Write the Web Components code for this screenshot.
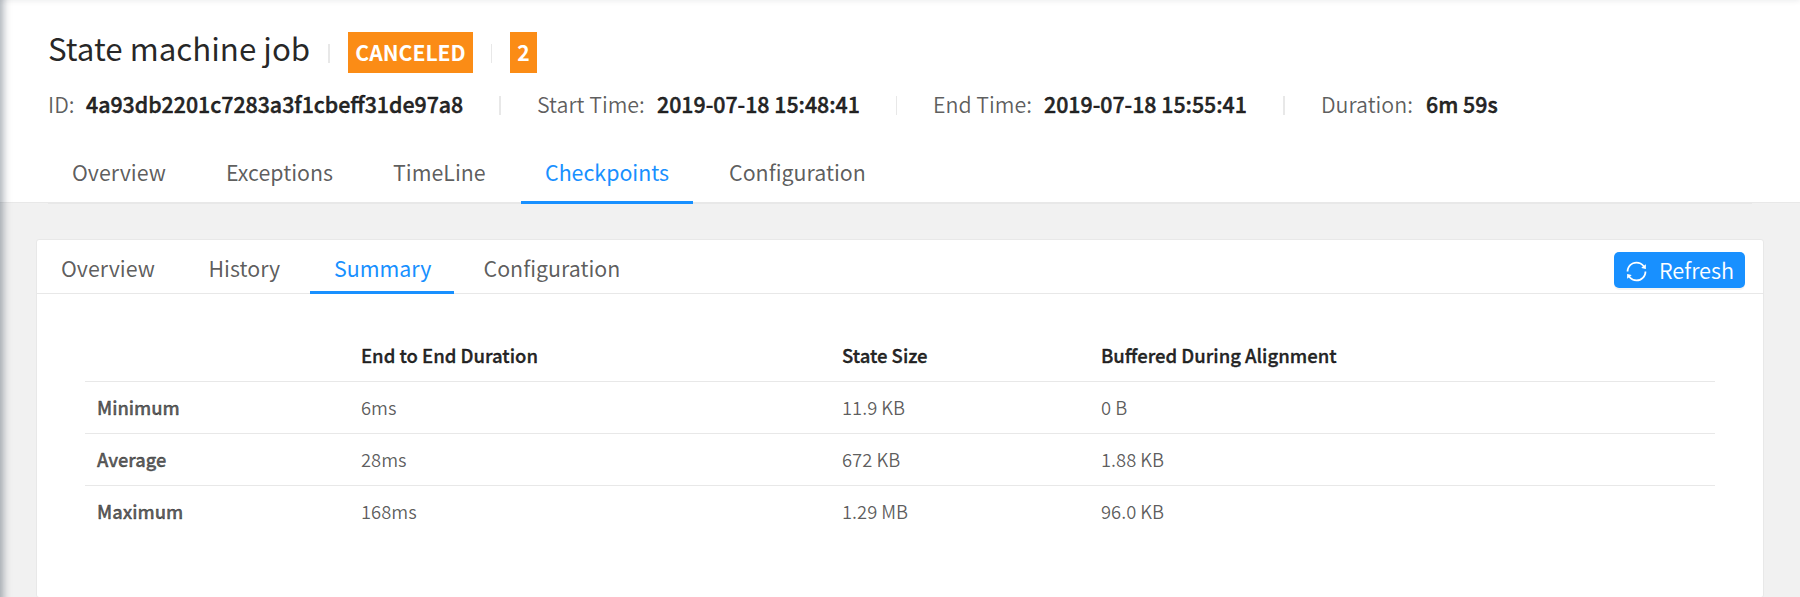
<!DOCTYPE html>
<html lang="en">
<head>
<meta charset="utf-8">
<title>State machine job</title>
<style>
html, body { margin: 0; height: 597px; overflow: hidden; }
body { background: #f1f1f1; font-family: "Noto Sans CJK SC", "Noto Sans", sans-serif; color: rgba(0,0,0,.65); }
</style>
</head>
<body>
<job-page></job-page>
<script>
const define = (name, html, setup) => {
  const template = document.createElement('template');
  template.innerHTML = html;
  customElements.define(name, class extends HTMLElement {
    connectedCallback() {
      if (this.shadowRoot) return;
      this.attachShadow({ mode: 'open' }).append(template.content.cloneNode(true));
      if (setup) setup(this);
    }
  });
};

define('job-divider', `
<style>
:host { display: block; flex: none; width: var(--w, 1px); height: 19px; background: #e8e8e8; }
</style>`);

define('job-badge', `
<style>
:host { display: block; box-sizing: border-box; flex: none; height: 41px; background: #fb8c16; color: #fff;
  font-size: 21.15px; font-weight: 700; line-height: 40px; text-align: center; white-space: nowrap; }
</style><slot></slot>`);

define('job-field', `
<style>
:host { display: flex; flex: none; font-size: 21.4px; font-weight: 350; line-height: 32px; white-space: nowrap; }
.label { flex: none; width: var(--label); }
.value { font-size: 21.33px; font-weight: 500; color: rgba(0,0,0,.85); -webkit-text-stroke: .5px rgba(0,0,0,.85); }
</style><span class="label"><slot name="label"></slot></span><span class="value"><slot></slot></span>`);

define('job-tab', `
<style>
:host { display: block; box-sizing: border-box; flex: none; padding-left: 24px; font-size: 21.38px;
  line-height: 32px; padding-top: var(--tab-top); border-bottom: 3px solid transparent; white-space: nowrap; }
:host([active]) { color: #1890ff; border-bottom-color: #1890ff; }
</style><slot></slot>`);

define('job-button', `
<style>
:host { display: flex; box-sizing: border-box; align-items: center; width: 131px; height: 36px; padding-left: 12px;
  background: #1890ff; color: #fff; border-radius: 5px; box-shadow: 0 2px 0 rgba(0,0,0,.045);
  font-size: 21.7px; font-weight: 350; line-height: 36px; }
svg { display: block; width: 21px; height: 21px; margin: 3px 12px 0 0; fill: currentColor; }
</style>
<svg viewBox="64 64 896 896"><path d="M168 504.2c1-43.7 10-86.1 26.9-126 17.3-41 42.1-77.7 73.7-109.4S337 212.3 378 195c42.4-17.9 87.4-27 133.9-27s91.5 9.1 133.8 27A341.5 341.5 0 0 1 755 268.8c9.9 9.9 19.2 20.4 27.8 31.4l-60.2 47a8 8 0 0 0 3 14.1l175.7 43c5 1.2 9.9-2.6 9.9-7.7l.8-180.9c0-6.7-7.7-10.5-12.9-6.3l-56.4 44.1C765.8 155.1 646.2 92 511.8 92 282.7 92 96.3 275.6 92 503.8a8 8 0 0 0 8 8.2h60c4.4 0 7.9-3.5 8-7.8zm756 7.8h-60c-4.4 0-7.9 3.5-8 7.8-1 43.7-10 86.1-26.9 126-17.3 41-42.1 77.8-73.7 109.4A342.45 342.45 0 0 1 512.1 856a342.24 342.24 0 0 1-243.2-100.8c-9.9-9.9-19.2-20.4-27.8-31.4l60.2-47a8 8 0 0 0-3-14.1l-175.7-43c-5-1.2-9.9 2.6-9.9 7.7l-.7 181c0 6.7 7.7 10.5 12.9 6.3l56.4-44.1C258.2 868.9 377.8 932 512.2 932c229.2 0 415.5-183.7 419.8-411.8a8 8 0 0 0-8-8.2z"/></svg><slot></slot>`);

define('job-header', `
<style>
:host { display: flex; flex-direction: column; box-sizing: border-box; height: 203px; padding: 26px 48px 0;
  background: #fff; border-bottom: 1px solid #e8e8e8; }
.title { display: flex; flex: none; height: 62px; }
h1 { margin: 0; flex: none; width: 280px; font-size: 31.3px; font-weight: 400; line-height: 44px; color: rgba(0,0,0,.85); white-space: nowrap; }
.title job-divider { margin-top: 18px; }
.title job-badge { margin: 6px 18px 0; }
.title job-badge:last-child { margin-right: 0; }
.fields { display: flex; flex: none; height: 32px; }
.fields job-divider { margin-top: 8px; }
.track { flex: none; box-sizing: border-box; width: 1704px; height: 84px; padding-top: 36px; border-bottom: 2px solid #e8e8e8; }
nav { display: flex; gap: 12px; --tab-top: 0px; height: 48px; }
job-tab { height: 48px; }
</style>
<div class="title">
  <h1>State machine job</h1>
  <job-divider style="--w:2px"></job-divider>
  <job-badge style="width:125px">CANCELED</job-badge>
  <job-divider></job-divider>
  <job-badge style="width:27px">2</job-badge>
</div>
<div class="fields">
  <job-field style="--label:38px;width:451px"><span slot="label">ID:</span>4a93db2201c7283a3f1cbeff31de97a8</job-field>
  <job-divider style="--w:2px;margin-right:36px"></job-divider>
  <job-field style="--label:120px;width:359px"><span slot="label">Start Time:</span>2019-07-18 15:48:41</job-field>
  <job-divider style="margin-right:36px"></job-divider>
  <job-field style="--label:111px;width:350px"><span slot="label">End Time:</span>2019-07-18 15:55:41</job-field>
  <job-divider style="--w:2px;margin-right:36px"></job-divider>
  <job-field style="--label:105px"><span slot="label">Duration:</span>6m 59s</job-field>
</div>
<div class="track"><nav>
  <job-tab style="width:142px">Overview</job-tab>
  <job-tab style="width:155px">Exceptions</job-tab>
  <job-tab style="width:140px">TimeLine</job-tab>
  <job-tab active style="width:172px">Checkpoints</job-tab>
  <job-tab>Configuration</job-tab>
</nav></div>`);

define('job-table', `
<style>
:host { display: block; }
.row { display: grid; grid-template-columns: 264px 481px 259px 1fr; height: 51px; line-height: 51px;
  font-size: 18.4px; font-weight: 350; border-bottom: 1px solid #e8e8e8; }
.row:last-child { border-bottom: 0; }
.row > * { padding-left: 12px; }
.head { font-size: 18.53px; font-weight: 500; color: rgba(0,0,0,.85); -webkit-text-stroke: .4px rgba(0,0,0,.85); }
b { font-size: 18.25px; font-weight: 500; -webkit-text-stroke: .4px rgba(0,0,0,.65); }
</style>`, host => {
  const rows = [
    ['', 'End to End Duration', 'State Size', 'Buffered During Alignment'],
    ['Minimum', '6ms', '11.9 KB', '0 B'],
    ['Average', '28ms', '672 KB', '1.88 KB'],
    ['Maximum', '168ms', '1.29 MB', '96.0 KB']
  ];
  rows.forEach((cells, i) => {
    const row = document.createElement('div');
    row.className = i ? 'row' : 'row head';
    cells.forEach((text, j) => {
      const cell = document.createElement(i && !j ? 'b' : 'span');
      cell.textContent = text;
      row.append(cell);
    });
    host.shadowRoot.append(row);
  });
});

define('job-card', `
<style>
:host { display: block; box-sizing: border-box; width: 1728px; height: 359px; margin: 36px 0 0 36px;
  background: #fff; border: 1px solid #e8e8e8; border-radius: 3px; }
.bar { display: flex; justify-content: space-between; box-sizing: border-box; height: 54px; border-bottom: 1px solid #e8e8e8; }
nav { display: flex; gap: 5.5px; --tab-top: 12px; }
job-tab { height: 54px; }
job-button { margin: 12px 18px 0 0; }
job-table { margin: 36px 48px 0 48px; }
</style>
<div class="bar">
  <nav>
    <job-tab style="width:142px">Overview</job-tab>
    <job-tab style="width:120px">History</job-tab>
    <job-tab active style="width:144px">Summary</job-tab>
    <job-tab>Configuration</job-tab>
  </nav>
  <job-button>Refresh</job-button>
</div>
<job-table></job-table>`);

/* Edge shadows cast by the application's side menu and top bar. */
define('job-page', `
<style>
:host { display: block; position: relative; height: 597px; overflow: hidden; }
.side, .top { position: absolute; pointer-events: none; }
.side { left: -40px; top: -40px; width: 40px; height: 680px; box-shadow: 2.67px 0 8px rgba(0,21,41,.35); }
.top { left: 0; top: -40px; width: 1800px; height: 40px; box-shadow: 0 1.33px 5.33px rgba(0,21,41,.08); }
</style>
<job-header></job-header>
<job-card></job-card>
<div class="top"></div>
<div class="side"></div>`);
</script>
</body>
</html>
